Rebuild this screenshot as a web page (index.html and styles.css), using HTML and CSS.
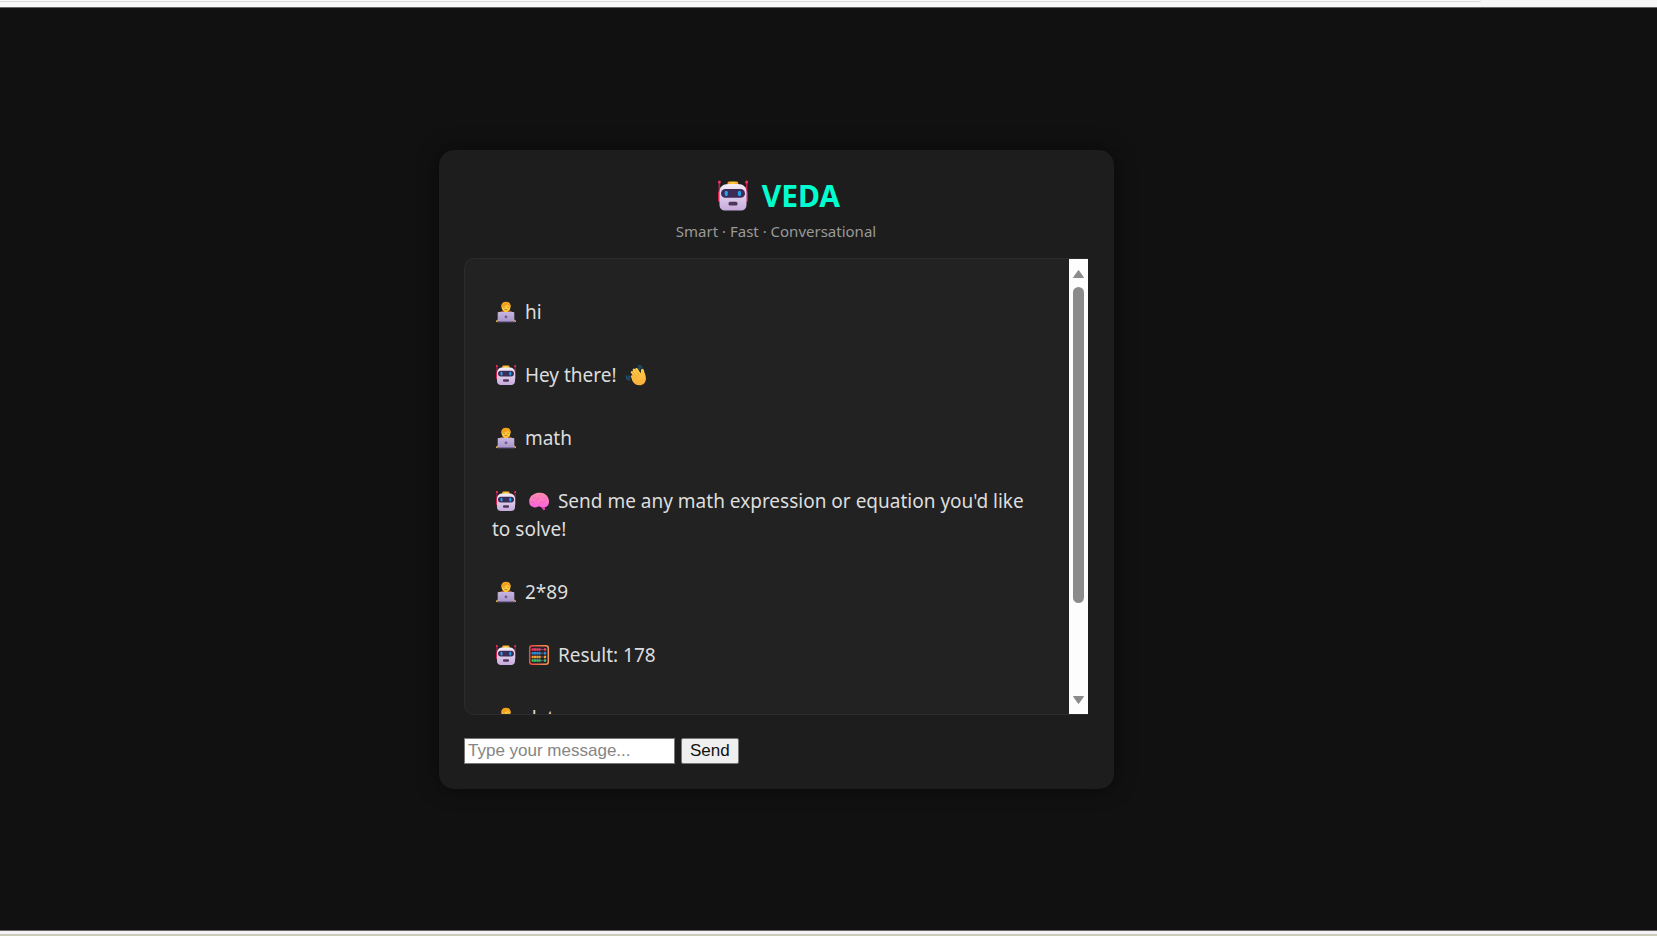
FILE: index.html
```html
<!DOCTYPE html>
<html lang="en">
<head>
<meta charset="utf-8">
<title>VEDA</title>
<link rel="stylesheet" href="styles.css">
</head>
<body>
<svg class="defs" aria-hidden="true">
  <defs>
    <linearGradient id="face" x1="0" y1="0" x2="0" y2="1"><stop offset="0" stop-color="#f3edf7"/><stop offset="1" stop-color="#c7a9dc"/></linearGradient>
    <linearGradient id="gold" x1="0" y1="0" x2="1" y2="0"><stop offset="0" stop-color="#f39b22"/><stop offset=".5" stop-color="#ffd03c"/><stop offset="1" stop-color="#f09a24"/></linearGradient>
    <linearGradient id="lid" x1="0" y1="0" x2="0" y2="1"><stop offset="0" stop-color="#c6b5df"/><stop offset="1" stop-color="#a996c9"/></linearGradient>
    <linearGradient id="pink" x1="0" y1="0" x2="0" y2="1"><stop offset="0" stop-color="#ff8fae"/><stop offset="1" stop-color="#fb62dd"/></linearGradient>
    <linearGradient id="frame" x1="0" y1="0" x2="1" y2="0"><stop offset="0" stop-color="#f0493d"/><stop offset="1" stop-color="#f59452"/></linearGradient>
    <linearGradient id="skin" x1="0" y1="0" x2="0" y2="1"><stop offset="0" stop-color="#ffd046"/><stop offset="1" stop-color="#fbad3a"/></linearGradient>
  </defs>
  <symbol id="robot" viewBox="0 0 28 22">
    <path d="M4.900 2v10M23.100 2v10" stroke="#c51f55" stroke-width="1"/>
    <circle cx="4.900" cy="2" r="1" fill="#f43160"/><circle cx="23.100" cy="2" r="1" fill="#f43160"/>
    <rect x="4" y="8" width="3" height="7.500" rx="1.400" fill="#dd204e"/><rect x="21" y="8" width="3" height="7.500" rx="1.400" fill="#b91f55"/>
    <rect x="10.300" y="1.600" width="7.200" height="4" rx="1" fill="url(#gold)"/>
    <path d="M11 3.400h6c4 0 6 2 6 5.600v8c0 2.700-1.500 4-4 4H9c-2.500 0-4-1.300-4-4V9c0-3.600 2-5.600 6-5.600Z" fill="url(#face)"/>
    <rect x="6" y="6.700" width="16" height="5.800" rx="2.900" fill="#3c2d58"/>
    <rect x="8.500" y="7.800" width="2" height="3.600" rx="1" fill="#20a5ed"/><rect x="17.300" y="7.800" width="2" height="3.600" rx="1" fill="#20a5ed"/>
    <rect x="11" y="15.200" width="6" height="2.500" rx="1" fill="#4b3659"/>
  </symbol>
  <symbol id="coder" viewBox="0 0 28 22">
    <path d="M4 20.500c.2-1.500 1.500-2 3-2h14c1.500 0 2.800.5 3 2v.5H4Z" fill="#f1b52f"/>
    <path d="M7 12c1-2 3.500-2.800 7-2.800s6 .8 7 2.800Z" fill="#a8663f"/>
    <path d="M12 8h4v3.500h-4Z" fill="#efa02b"/>
    <path d="M9.500 5.500C9.500 2.700 11 1 14 1s4.500 1.700 4.500 4.500c0 3-1.800 5.400-4.500 5.400S9.500 8.500 9.500 5.500Z" fill="#ffca3b"/>
    <path d="M9.400 6C9 2.700 11 .8 14 .8s5 2 4.600 5.200c-1-.4-2.200-1.200-3-2.500-1.400 1.300-3.300 2.300-6.200 2.500Z" fill="#f4a01d"/>
    <path d="M11.500 6.300h1.200M15.400 6.300h1.200M12.600 8.600h2.800" stroke="#a45b28" stroke-width=".7"/>
    <rect x="5.700" y="11" width="16.600" height="9.500" rx=".8" fill="url(#lid)"/>
    <rect x="5" y="20" width="18" height="1.200" rx=".5" fill="#7e6ba0"/>
    <circle cx="14" cy="15.800" r="1.400" fill="#70598f"/>
  </symbol>
  <symbol id="wave" viewBox="0 0 28 22">
    <path d="M16 1.800c2.500-.4 4 1.200 4 3.400M15.700 3.800c1.300 0 2 .8 2 2M4.600 11.500c-.5 2.700.8 4.200 3.300 4.300M6.800 11.500c0 1.300.6 2 1.700 2.200" stroke="#1d5277" stroke-width="1.700" fill="none"/>
    <path d="M9.200 13.200c-1-1.400.7-2.700 1.800-1.500L9 9c-1-1.600.9-2.900 2-1.500l-.2-1c-.7-1.700 1.400-2.700 2.400-1.100.2-1.500 1.800-1.800 2.700-.4l2.700 4.200c.5-.9.2-2 .4-3 .3-1.700 2.600-1.600 2.900.1.300 2.500 2 4.600 2 8.100 0 4.200-2.800 6.800-6.400 6.800-3.300 0-5.500-1.600-7.100-4.300Z" fill="url(#skin)"/>
    <path d="m10.800 11 3.300 4M11.200 8l4.500 5.500M13.200 5.400l4 6" stroke="#ec9730" stroke-width=".6"/>
  </symbol>
  <symbol id="brain" viewBox="0 0 28 22">
    <path d="M15.500 16h4l.8 3.800-2 .5Z" fill="#d93cae"/>
    <path d="M4.300 12C4 8 6 5.500 8.500 4.500 10.500 3 13 2.500 15.500 2.800c4 .2 7.500 3 8.300 7 .8 4-.8 7.200-4.300 7.500-2 .2-4.200-.2-5.500-1-2.500 1.500-5 1.300-7 .2-1.800-.8-2.800-2.300-2.700-4.500Z" fill="url(#pink)"/>
    <path d="M7.500 7c1 .8 2.200.9 3.200.4M10.500 10.700c2-.4 3-2 2.700-4M15 4.200c-.3 1 .5 1.800 1.700 2.200M20.500 7c-.7.8-1.500 1.200-2.500 1M6 12.500c1.300-.8 2.500-.6 3.700.2M14.700 15.300c-.4-1.600.5-2.600 2.300-2.900 2.300-.2 3.700-1.200 3.700-2.700" stroke="#e9609c" stroke-width=".6" fill="none"/>
  </symbol>
  <symbol id="abacus" viewBox="0 0 28 22">
    <rect x="4.700" y="1.700" width="18.600" height="18.600" rx="2.500" fill="#28222a" stroke="url(#frame)" stroke-width="1.500"/>
    <path d="M6.500 5.500h15M6.500 9.200h15M6.500 12.900h15M6.500 16.600h15" stroke="#8c8790" stroke-width=".6"/>
    <g stroke-width="2.500" stroke-dasharray="2 .3">
      <path d="M6.700 5.500h9M19 5.500h2.200" stroke="#f23868"/>
      <path d="M6.700 9.200h9M19 9.200h2.200" stroke="#268de0"/>
      <path d="M6.700 12.900h9M19 12.900h2.200" stroke="#f3a12f"/>
      <path d="M6.700 16.600h9M19 16.600h2.200" stroke="#36c568"/>
    </g>
  </symbol>
</svg>

<div class="browser-edge"><div class="address-edge"></div></div>
<main class="page">
  <section class="card">
    <header class="header">
      <h1 class="title"><svg class="logo" role="img" aria-label="Robot"><use href="#robot"/></svg> VEDA</h1>
      <p class="tagline">Smart · Fast · Conversational</p>
    </header>
    <div class="chat">
      <div class="messages">
        <p class="message"><svg class="emoji"><use href="#coder"/></svg> hi</p>
        <p class="message"><svg class="emoji"><use href="#robot"/></svg> Hey there! <svg class="emoji"><use href="#wave"/></svg></p>
        <p class="message"><svg class="emoji"><use href="#coder"/></svg> math</p>
        <p class="message"><svg class="emoji"><use href="#robot"/></svg> <svg class="emoji"><use href="#brain"/></svg> Send me any math expression or equation you'd like to solve!</p>
        <p class="message"><svg class="emoji"><use href="#coder"/></svg> 2*89</p>
        <p class="message"><svg class="emoji"><use href="#robot"/></svg> <svg class="emoji"><use href="#abacus"/></svg> Result: 178</p>
        <p class="message"><svg class="emoji"><use href="#coder"/></svg> date</p>
      </div>
      <div class="scrollbar" aria-hidden="true">
        <svg class="arrow" viewBox="0 0 13 10"><path d="M6.500 1.500 11.500 8.500h-10Z"/></svg>
        <div class="track"><div class="thumb"></div></div>
        <svg class="arrow" viewBox="0 0 13 10"><path d="M6.500 8.500 11.500 1.500h-10Z"/></svg>
      </div>
    </div>
    <form class="composer">
      <input class="field" type="text" placeholder="Type your message..." aria-label="Type your message">
      <button class="send" type="button">Send</button>
    </form>
  </section>
</main>
<div class="desktop-edge"></div>
</body>
</html>
```
FILE: styles.css
```css
* { box-sizing: border-box; }

body {
  margin: 0;
  min-height: 100vh;
  display: flex;
  flex-direction: column;
  background: #111;
  color: #ddd;
  font-family: "Noto Sans", "Open Sans", sans-serif;
}

.defs { position: absolute; width: 0; height: 0; }

.browser-edge {
  height: 8px;
  background: #f7f7f7;
  border-bottom: 1px solid #666;
}

.address-edge {
  width: 89.4%;
  height: 2px;
  border-bottom: 1px solid #d9d9d9;
  border-bottom-right-radius: 8px;
}

.page {
  flex: 1;
  display: flex;
  align-items: center;
  justify-content: center;
  padding-right: 104px;
}

.card {
  width: 100%;
  max-width: 675px;
  padding: 24px 26px 25px 25px;
  background: #1d1d1d;
  border-radius: 15px;
  box-shadow: 0 0 20px rgba(0, 0, 0, 0.5);
}

.header { text-align: center; }

.title {
  margin: 0;
  color: #00ffcf;
  font-size: 30px;
  line-height: 44px;
}

.logo {
  width: 42px;
  height: 33px;
  vertical-align: -5px;
}

.tagline {
  margin: 2px 0 16px;
  color: #999;
  font-size: 15px;
  line-height: 22px;
}

.chat {
  display: flex;
  height: 457px;
  overflow: hidden;
  background: #222;
  border: 1px solid #2c2c2c;
  border-right: 0;
  border-radius: 10px 0 0 10px;
}

.messages {
  flex: 1;
  display: flex;
  flex-direction: column;
  gap: 35px;
  padding: 39px 27px 0;
}

.message {
  margin: 0;
  font-size: 19px;
  line-height: 28px;
}

.emoji {
  width: 28px;
  height: 22px;
  vertical-align: -4px;
}

.scrollbar {
  width: 19px;
  display: flex;
  flex-direction: column;
  align-items: center;
  gap: 8px;
  padding: 10px 0 9px;
  background: #fdfdfd;
}

.arrow { width: 13px; height: 10px; fill: #8b8b8b; stroke: #8b8b8b; stroke-linejoin: round; }

.track { flex: 1; }

.thumb {
  width: 11px;
  height: 79%;
  background: #8b8b8b;
  border-radius: 6px;
}

.composer {
  display: flex;
  gap: 6px;
  margin-top: 23px;
}

.field,
.send {
  height: 26px;
  font-family: "Liberation Sans", Arial, sans-serif;
  font-size: 17px;
  line-height: 20px;
  border: 1px solid #767676;
}

.field {
  width: 211px;
  padding: 0 3px;
  background: #fff;
  color: #111;
}

.field::placeholder { color: #858585; }

.send {
  padding: 0 8px;
  background: #efefef;
  color: #111;
  border-radius: 2px;
}

.desktop-edge {
  height: 6px;
  background: #f5f3f5;
  border-top: 1px solid #666;
  border-bottom: 2px solid #cccdb8;
}
```
